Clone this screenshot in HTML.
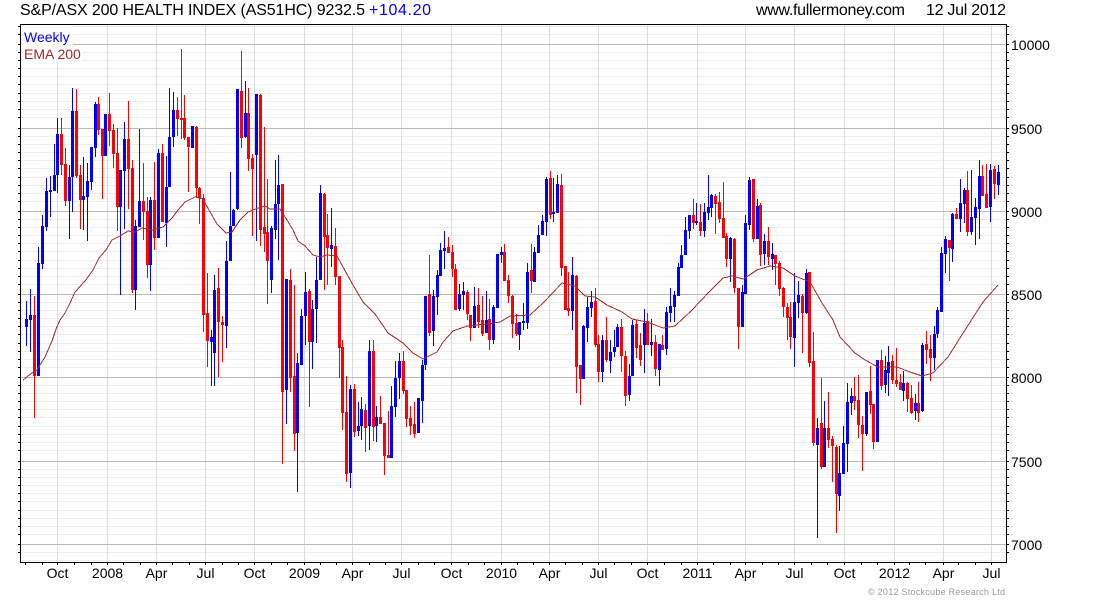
<!DOCTYPE html>
<html>
<head>
<meta charset="utf-8">
<title>S&amp;P/ASX 200 Health Index</title>
<style>
html,body{margin:0;padding:0;background:#fff;width:1100px;height:600px;overflow:hidden}
svg{display:block}
text{font-family:"Liberation Sans",Arial,sans-serif}
</style>
</head>
<body>
<svg xmlns="http://www.w3.org/2000/svg" width="1100" height="600" viewBox="0 0 1100 600">
<rect width="1100" height="600" fill="#fff"/>
<!-- minor grid -->
<path shape-rendering="crispEdges" fill="none" stroke="#eeeeee" stroke-width="1" d="M21 26.5H1006M21 34.5H1006M21 52.5H1006M21 60.5H1006M21 68.5H1006M21 76.5H1006M21 84.5H1006M21 93.5H1006M21 101.5H1006M21 109.5H1006M21 117.5H1006M21 136.5H1006M21 144.5H1006M21 152.5H1006M21 160.5H1006M21 168.5H1006M21 177.5H1006M21 185.5H1006M21 193.5H1006M21 201.5H1006M21 219.5H1006M21 227.5H1006M21 235.5H1006M21 243.5H1006M21 251.5H1006M21 260.5H1006M21 268.5H1006M21 276.5H1006M21 284.5H1006M21 302.5H1006M21 310.5H1006M21 318.5H1006M21 326.5H1006M21 334.5H1006M21 343.5H1006M21 351.5H1006M21 359.5H1006M21 367.5H1006M21 385.5H1006M21 393.5H1006M21 401.5H1006M21 409.5H1006M21 417.5H1006M21 426.5H1006M21 434.5H1006M21 442.5H1006M21 450.5H1006M21 469.5H1006M21 477.5H1006M21 485.5H1006M21 493.5H1006M21 501.5H1006M21 510.5H1006M21 518.5H1006M21 526.5H1006M21 534.5H1006M21 552.5H1006M21 560.5H1006"/>
<!-- vertical grid -->
<path shape-rendering="crispEdges" fill="none" stroke="#dddddd" stroke-width="1" d="M57.5 25V562M107.5 25V562M156.5 25V562M205.5 25V562M254.5 25V562M304.5 25V562M352.5 25V562M401.5 25V562M451.5 25V562M501.5 25V562M549.5 25V562M598.5 25V562M647.5 25V562M697.5 25V562M745.5 25V562M794.5 25V562M844.5 25V562M894.5 25V562M943.5 25V562M991.5 25V562"/>
<!-- major grid -->
<path shape-rendering="crispEdges" fill="none" stroke="#bbbbbb" stroke-width="1" d="M21 44.5H1006M21 128.5H1006M21 211.5H1006M21 294.5H1006M21 377.5H1006M21 461.5H1006M21 544.5H1006"/>
<!-- legend backing -->
<rect x="21" y="25" width="52" height="20" fill="#fff"/>
<rect x="21" y="45" width="61" height="17" fill="#fff"/>
<!-- blue wicks -->
<path shape-rendering="crispEdges" fill="none" stroke="#0000ff" stroke-width="1" d="M26.5 301V346M30.5 289V352M38.5 247V376M42.5 215V269M46.5 178V231M50.5 176V217M54.5 144V191M57.5 118V193M69.5 165V239M72.5 88V212M83.5 157V230M87.5 163V241M91.5 147V190M95.5 102V157M105.5 114V156M120.5 170V295M124.5 122V229M135.5 220V310M139.5 129V227M150.5 197V291M158.5 149V238M166.5 156V247M169.5 88V187M173.5 92V147M192.5 126V148M211.5 330V386M214.5 275V386M226.5 241V348M230.5 172V261M233.5 209V226M237.5 89V210M245.5 81V138M256.5 94V241M271.5 226V293M275.5 160V239M278.5 155V260M286.5 279V424M297.5 353V492M301.5 309V365M305.5 272V345M312.5 300V369M316.5 257V343M320.5 185V280M331.5 208V267M350.5 385V488M358.5 402V436M361.5 397V440M369.5 340V450M376.5 406V442M391.5 386V458M395.5 361V417M399.5 353V399M418.5 398V433M422.5 360V423M425.5 296V370M433.5 290V346M437.5 270V315M440.5 243V276M444.5 231V269M459.5 284V311M463.5 282V310M474.5 287V328M486.5 291V333M493.5 305V344M497.5 254V308M501.5 247V263M519.5 322V350M523.5 303V330M527.5 263V329M534.5 247V282M538.5 225V253M542.5 215V235M546.5 177V236M553.5 178V222M557.5 175V213M572.5 257V330M583.5 325V379M587.5 297V342M591.5 291V317M602.5 335V382M610.5 340V373M614.5 330V357M617.5 324V347M629.5 364V401M632.5 320V376M644.5 309V373M651.5 319V356M659.5 344V386M666.5 307V355M670.5 288V322M674.5 291V322M678.5 263V296M681.5 245V268M685.5 217V255M689.5 215V239M696.5 203V225M704.5 203V237M708.5 175V220M711.5 194V217M730.5 237V282M742.5 285V327M745.5 215V294M749.5 177V230M757.5 199V239M764.5 234V265M772.5 243V270M794.5 273V367M798.5 281V318M806.5 269V314M817.5 418V538M824.5 401V467M839.5 446V511M843.5 426V474M847.5 383V472M851.5 388V415M866.5 392V436M877.5 360V442M885.5 356V393M888.5 346V396M903.5 371V401M915.5 394V420M922.5 343V412M934.5 326V370M937.5 307V338M941.5 247V312M945.5 236V273M952.5 213V262M960.5 179V232M964.5 188V223M971.5 170V235M975.5 198V245M979.5 160V239M990.5 164V222M998.5 165V195"/>
<!-- red wicks -->
<path shape-rendering="crispEdges" fill="none" stroke="#ff0000" stroke-width="1" d="M34.5 296V418M61.5 118V175M65.5 148V206M76.5 89V178M80.5 165V229M98.5 97V135M102.5 129V199M109.5 93V146M113.5 124V168M117.5 128V231M128.5 101V209M132.5 160V293M143.5 163V240M147.5 197V278M154.5 162V250M162.5 144V222M177.5 97V136M181.5 49V139M184.5 95V140M188.5 137V192M196.5 126V197M199.5 187V224M203.5 194V332M207.5 273V367M218.5 268V377M222.5 316V362M241.5 51V148M248.5 88V171M252.5 154V236M260.5 94V246M264.5 127V252M267.5 179V304M282.5 184V464M290.5 269V392M294.5 285V451M309.5 289V407M324.5 193V290M327.5 214V285M335.5 228V285M339.5 276V378M342.5 340V430M346.5 376V482M354.5 384V437M365.5 404V452M373.5 340V441M380.5 396V424M384.5 423V475M388.5 411V458M403.5 351V394M406.5 390V427M410.5 406V435M414.5 402V438M429.5 255V336M448.5 237V253M452.5 245V277M455.5 264V310M467.5 290V320M470.5 315V341M478.5 288V328M482.5 296V336M489.5 299V350M504.5 244V281M508.5 275V303M512.5 295V338M516.5 314V336M531.5 244V293M550.5 171V219M561.5 174V276M565.5 266V310M568.5 272V316M576.5 275V393M580.5 365V405M595.5 288V347M598.5 335V382M606.5 317V362M621.5 319V372M625.5 351V406M636.5 320V358M640.5 333V366M647.5 313V345M655.5 335V376M662.5 335V350M693.5 199V229M700.5 204V236M715.5 194V234M719.5 192V223M723.5 182V238M726.5 233V267M734.5 238V293M738.5 288V349M753.5 179V242M760.5 203V266M768.5 227V265M775.5 255V285M779.5 261V296M783.5 287V317M787.5 303V340M790.5 302V349M802.5 294V353M809.5 272V367M813.5 332V446M821.5 378V469M828.5 392V448M832.5 436V482M836.5 445V533M854.5 377V410M858.5 375V438M862.5 416V471M870.5 366V414M873.5 404V449M881.5 350V390M892.5 355V384M896.5 348V387M900.5 374V390M907.5 382V412M911.5 385V414M918.5 382V422M926.5 331V364M930.5 335V381M949.5 240V281M956.5 208V219M967.5 171V236M982.5 165V196M986.5 164V208M994.5 166V199"/>
<!-- blue bodies -->
<path shape-rendering="crispEdges" fill="none" stroke="#0000ff" stroke-width="3" d="M26.5 319V327M30.5 315V320M38.5 263V376M42.5 226V264M46.5 191V227M50.5 190V192M54.5 175V191M57.5 134V175M69.5 177V201M72.5 111V177M83.5 196V200M87.5 181V197M91.5 147V182M95.5 104V148M105.5 114V156M120.5 170V207M124.5 139V171M135.5 226V290M139.5 201V227M150.5 200V265M158.5 153V238M166.5 187V223M169.5 137V187M173.5 110V137M192.5 126V148M211.5 337V342M214.5 290V353M226.5 261V326M230.5 226V261M233.5 210V226M237.5 89V209M245.5 113V137M256.5 94V155M271.5 228V280M275.5 204V230M278.5 185V204M286.5 279V390M297.5 363V433M301.5 316V365M305.5 292V316M312.5 309V342M316.5 280V309M320.5 193V280M331.5 245V249M350.5 389V473M358.5 426V431M361.5 409V426M369.5 351V426M376.5 417V426M391.5 406V458M395.5 378V407M399.5 361V378M418.5 398V433M422.5 365V401M425.5 296V365M433.5 296V331M437.5 275V297M440.5 250V276M444.5 248V251M459.5 294V309M463.5 291V295M474.5 306V328M486.5 320V333M493.5 307V340M497.5 254V308M501.5 252V255M519.5 322V335M523.5 321V323M527.5 272V323M534.5 252V282M538.5 235V253M542.5 221V235M546.5 179V222M553.5 212V214M557.5 184V213M572.5 275V311M583.5 326V379M587.5 307V328M591.5 302V308M602.5 340V372M610.5 352V361M614.5 347V352M617.5 327V347M629.5 376V395M632.5 325V376M644.5 323V345M651.5 342V345M659.5 344V370M666.5 312V349M670.5 306V313M674.5 295V307M678.5 267V296M681.5 255V268M685.5 230V255M689.5 215V231M696.5 221V223M704.5 212V231M708.5 207V213M711.5 195V208M730.5 238V259M742.5 292V327M745.5 223V294M749.5 180V225M757.5 206V239M764.5 241V254M772.5 254V259M794.5 302V338M798.5 295V303M806.5 273V313M817.5 428V445M824.5 428V467M839.5 473V496M843.5 443V474M847.5 402V444M851.5 396V403M866.5 392V434M877.5 360V442M885.5 370V385M888.5 362V373M903.5 383V391M915.5 403V411M922.5 345V411M934.5 334V358M937.5 310V334M941.5 253V312M945.5 239V254M952.5 214V249M960.5 203V219M964.5 190V204M971.5 217V232M975.5 207V218M979.5 176V209M990.5 170V207M998.5 172V185"/>
<!-- red bodies -->
<path shape-rendering="crispEdges" fill="none" stroke="#ff0000" stroke-width="3" d="M34.5 315V376M61.5 134V165M65.5 164V201M76.5 111V176M80.5 175V200M98.5 104V130M102.5 129V156M109.5 114V131M113.5 130V154M117.5 153V207M128.5 139V169M132.5 168V290M143.5 201V212M147.5 211V265M154.5 200V238M162.5 153V222M177.5 110V119M181.5 118V120M184.5 118V138M188.5 137V147M196.5 127V188M199.5 188V198M203.5 198V315M207.5 313V341M218.5 288V322M222.5 322V325M241.5 91V138M248.5 113V159M252.5 158V169M260.5 95V230M264.5 227V234M267.5 232V261M282.5 184V392M290.5 280V378M294.5 376V434M309.5 291V342M324.5 194V237M327.5 235V248M335.5 246V277M339.5 276V348M342.5 347V413M346.5 412V474M354.5 389V432M365.5 410V428M373.5 351V427M380.5 417V424M384.5 423V456M388.5 455V458M403.5 361V391M406.5 390V419M410.5 418V426M414.5 424V434M429.5 294V333M448.5 247V253M452.5 252V269M455.5 269V310M467.5 292V314M470.5 315V328M478.5 305V322M482.5 320V334M489.5 319V340M504.5 252V281M508.5 280V296M512.5 296V324M516.5 323V334M531.5 270V281M550.5 178V215M561.5 185V268M565.5 266V310M568.5 308V311M576.5 276V367M580.5 365V379M595.5 301V345M598.5 344V372M606.5 340V360M621.5 327V356M625.5 356V396M636.5 324V348M640.5 345V360M647.5 321V345M655.5 342V369M662.5 345V350M693.5 215V223M700.5 222V231M715.5 196V204M719.5 202V219M723.5 218V238M726.5 236V259M734.5 239V288M738.5 288V327M753.5 179V239M760.5 205V255M768.5 241V257M775.5 255V264M779.5 263V289M783.5 288V307M787.5 307V318M790.5 317V337M802.5 296V313M809.5 272V363M813.5 361V443M821.5 423V467M828.5 428V440M832.5 439V446M836.5 447V494M854.5 396V401M858.5 400V425M862.5 425V434M870.5 391V405M873.5 404V442M881.5 360V386M892.5 361V380M896.5 380V384M900.5 382V390M907.5 383V399M911.5 398V413M918.5 403V413M926.5 344V350M930.5 349V358M949.5 240V248M956.5 214V219M967.5 190V232M982.5 176V196M986.5 194V208M994.5 169V184"/>
<!-- EMA -->
<polyline shape-rendering="crispEdges" fill="none" stroke="#a52a2a" stroke-width="1" points="23,380 28,376 32,373 37,370 40,365 45,357 52,341 56,329 60,320 65,313 70,303 75,292 85,281 93,270 99,258 106,250 112,240 120,236 128,231 135,232 142,228 152,230 163,227 172,218 178,210 185,202 195,197 203,199 209,210 217,224 226,233 232,232 240,220 248,212 258,208 265,206 270,209 280,209 287,220 293,230 298,241 305,246 313,255 320,257 327,255 337,256 343,267 353,285 363,302 375,314 388,333 403,343 413,353 423,359 437,352 443,342 453,331 467,326 487,324 500,322 510,316 530,315 543,303 562,283 575,286 585,296 595,297 607,305 622,312 632,319 647,322 663,328 675,326 692,310 710,291 723,278 732,276 743,279 745,278 757,270 770,266 783,268 795,276 810,282 822,303 833,320 840,337 855,353 865,360 878,367 897,367 910,372 922,376 933,373 948,357 967,327 983,302 998,285"/>
<!-- frame -->
<path shape-rendering="crispEdges" fill="none" stroke="#000" stroke-width="1" d="M20.5 24.5H1006.5V562.5H20.5Z"/>
<!-- left ticks -->
<path shape-rendering="crispEdges" fill="none" stroke="#000" stroke-width="1" d="M18 26.5H20M18 34.5H20M18 44.5H20M18 52.5H20M18 60.5H20M18 68.5H20M18 76.5H20M18 84.5H20M18 93.5H20M18 101.5H20M18 109.5H20M18 117.5H20M18 128.5H20M18 136.5H20M18 144.5H20M18 152.5H20M18 160.5H20M18 168.5H20M18 177.5H20M18 185.5H20M18 193.5H20M18 201.5H20M18 211.5H20M18 219.5H20M18 227.5H20M18 235.5H20M18 243.5H20M18 251.5H20M18 260.5H20M18 268.5H20M18 276.5H20M18 284.5H20M18 294.5H20M18 302.5H20M18 310.5H20M18 318.5H20M18 326.5H20M18 334.5H20M18 343.5H20M18 351.5H20M18 359.5H20M18 367.5H20M18 377.5H20M18 385.5H20M18 393.5H20M18 401.5H20M18 409.5H20M18 417.5H20M18 426.5H20M18 434.5H20M18 442.5H20M18 450.5H20M18 461.5H20M18 469.5H20M18 477.5H20M18 485.5H20M18 493.5H20M18 501.5H20M18 510.5H20M18 518.5H20M18 526.5H20M18 534.5H20M18 544.5H20M18 552.5H20"/>
<!-- right ticks -->
<path shape-rendering="crispEdges" fill="none" stroke="#000" stroke-width="1" d="M1007 26.5H1009M1007 34.5H1009M1007 44.5H1009M1007 52.5H1009M1007 60.5H1009M1007 68.5H1009M1007 76.5H1009M1007 84.5H1009M1007 93.5H1009M1007 101.5H1009M1007 109.5H1009M1007 117.5H1009M1007 128.5H1009M1007 136.5H1009M1007 144.5H1009M1007 152.5H1009M1007 160.5H1009M1007 168.5H1009M1007 177.5H1009M1007 185.5H1009M1007 193.5H1009M1007 201.5H1009M1007 211.5H1009M1007 219.5H1009M1007 227.5H1009M1007 235.5H1009M1007 243.5H1009M1007 251.5H1009M1007 260.5H1009M1007 268.5H1009M1007 276.5H1009M1007 284.5H1009M1007 294.5H1009M1007 302.5H1009M1007 310.5H1009M1007 318.5H1009M1007 326.5H1009M1007 334.5H1009M1007 343.5H1009M1007 351.5H1009M1007 359.5H1009M1007 367.5H1009M1007 377.5H1009M1007 385.5H1009M1007 393.5H1009M1007 401.5H1009M1007 409.5H1009M1007 417.5H1009M1007 426.5H1009M1007 434.5H1009M1007 442.5H1009M1007 450.5H1009M1007 461.5H1009M1007 469.5H1009M1007 477.5H1009M1007 485.5H1009M1007 493.5H1009M1007 501.5H1009M1007 510.5H1009M1007 518.5H1009M1007 526.5H1009M1007 534.5H1009M1007 544.5H1009M1007 552.5H1009"/>
<!-- bottom ticks -->
<path shape-rendering="crispEdges" fill="none" stroke="#000" stroke-width="1" d="M25.5 563V565M42.5 563V565M57.5 563V565M74.5 563V565M91.5 563V565M107.5 563V565M123.5 563V565M140.5 563V565M156.5 563V565M172.5 563V565M189.5 563V565M205.5 563V565M222.5 563V565M238.5 563V565M254.5 563V565M271.5 563V565M287.5 563V565M304.5 563V565M320.5 563V565M336.5 563V565M352.5 563V565M369.5 563V565M385.5 563V565M401.5 563V565M418.5 563V565M434.5 563V565M451.5 563V565M468.5 563V565M484.5 563V565M501.5 563V565M517.5 563V565M533.5 563V565M549.5 563V565M565.5 563V565M582.5 563V565M598.5 563V565M614.5 563V565M631.5 563V565M647.5 563V565M664.5 563V565M681.5 563V565M697.5 563V565M713.5 563V565M730.5 563V565M745.5 563V565M762.5 563V565M778.5 563V565M794.5 563V565M811.5 563V565M827.5 563V565M844.5 563V565M861.5 563V565M877.5 563V565M894.5 563V565M909.5 563V565M925.5 563V565M943.5 563V565M958.5 563V565M975.5 563V565M991.5 563V565"/>
<!-- header text -->
<text x="20" y="15" font-size="16" fill="#000" textLength="345">S&amp;P/ASX 200 HEALTH INDEX (AS51HC) 9232.5</text>
<text x="369" y="15" font-size="16" fill="#0000ff" textLength="62">+104.20</text>
<text x="756" y="15" font-size="16" fill="#000" textLength="149">www.fullermoney.com</text>
<text x="926" y="15" font-size="16" fill="#000" textLength="80">12 Jul 2012</text>
<!-- legend -->
<text x="24" y="42" font-size="14" fill="#0000ff">Weekly</text>
<text x="24" y="59" font-size="14" fill="#a52a2a">EMA 200</text>
<!-- y labels -->
<g font-size="14" fill="#000">
<text x="1011" y="50">10000</text>
<text x="1011" y="134">9500</text>
<text x="1011" y="217">9000</text>
<text x="1011" y="300">8500</text>
<text x="1011" y="383">8000</text>
<text x="1011" y="467">7500</text>
<text x="1011" y="550">7000</text>
</g>
<!-- x labels -->
<g font-size="14" fill="#000" text-anchor="middle">
<text x="57.5" y="578">Oct</text>
<text x="107.5" y="578">2008</text>
<text x="156.5" y="578">Apr</text>
<text x="205.5" y="578">Jul</text>
<text x="254.5" y="578">Oct</text>
<text x="304.5" y="578">2009</text>
<text x="352.5" y="578">Apr</text>
<text x="401.5" y="578">Jul</text>
<text x="451.5" y="578">Oct</text>
<text x="501.5" y="578">2010</text>
<text x="549.5" y="578">Apr</text>
<text x="598.5" y="578">Jul</text>
<text x="647.5" y="578">Oct</text>
<text x="697.5" y="578">2011</text>
<text x="745.5" y="578">Apr</text>
<text x="794.5" y="578">Jul</text>
<text x="844.5" y="578">Oct</text>
<text x="894.5" y="578">2012</text>
<text x="943.5" y="578">Apr</text>
<text x="991.5" y="578">Jul</text>
</g>
<text x="868" y="595" font-size="9" fill="#999999" textLength="137">© 2012 Stockcube Research Ltd</text>
</svg>
</body>
</html>
